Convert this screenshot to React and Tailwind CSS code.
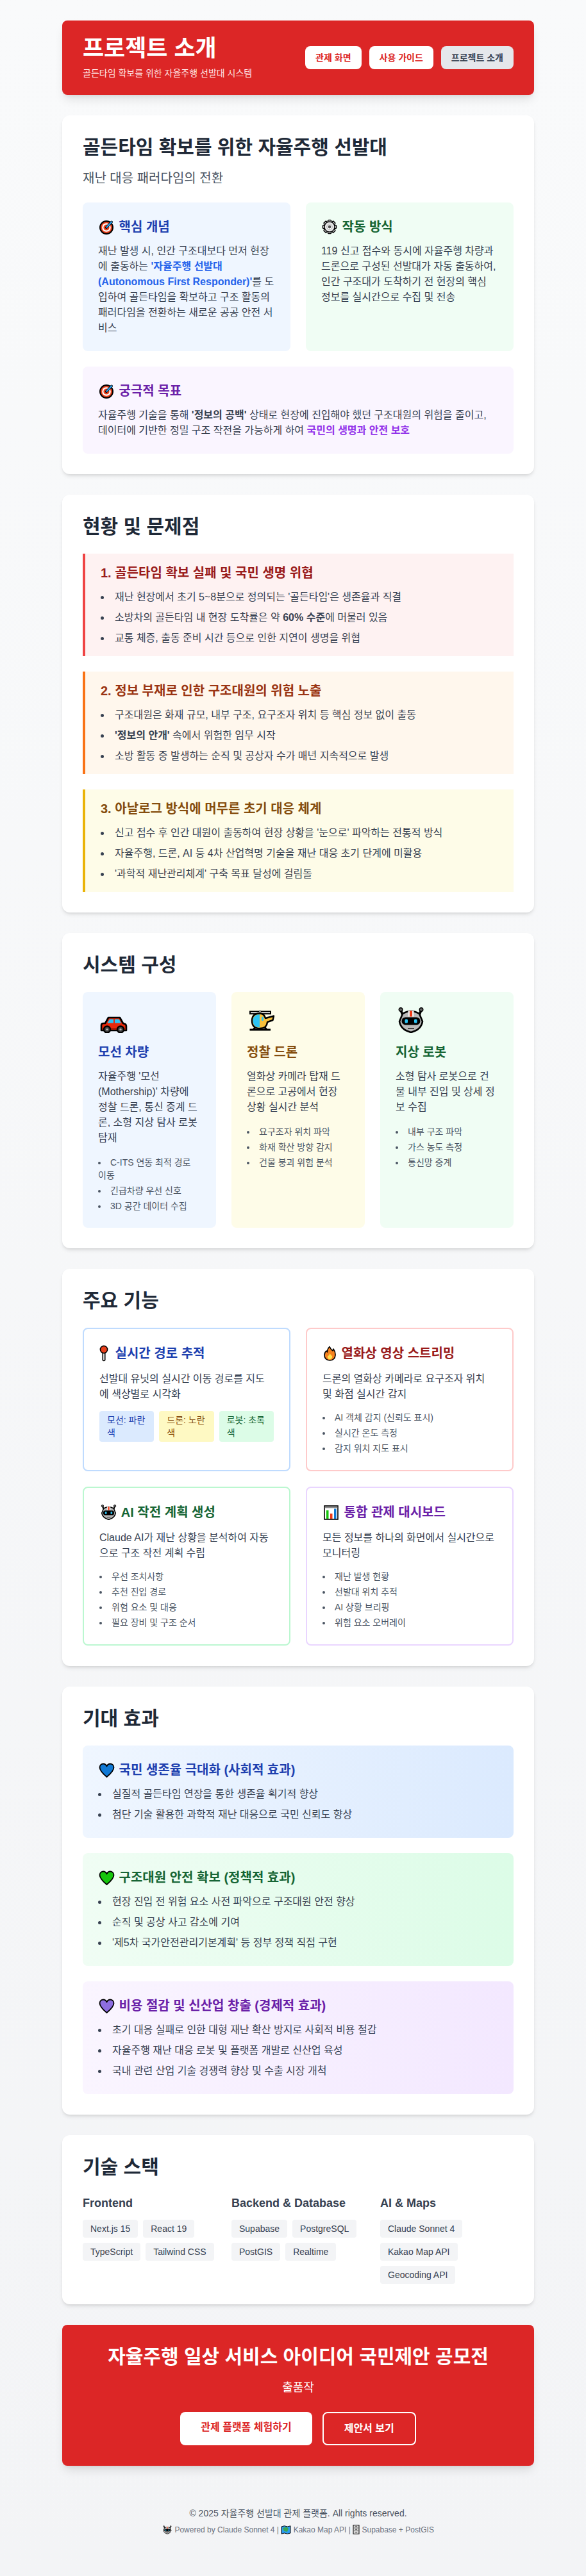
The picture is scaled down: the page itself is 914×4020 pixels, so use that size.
import React from 'react';

/* Emoji-style icons drawn by hand, black outline like the reference */
const TargetIcon = () => (
    <svg viewBox="0 0 27 24" className="inline-block w-[27px] h-6 align-[-5px]">
        <circle cx="13" cy="13" r="10" fill="#e8401c" stroke="#000" strokeWidth="2" />
        <circle cx="13" cy="13" r="6.8" fill="#fff" />
        <circle cx="13" cy="13" r="4.6" fill="#e8401c" />
        <path d="M13 13 L21 4.5" stroke="#000" strokeWidth="4" strokeLinecap="round" />
        <path d="M13.5 12.5 L21 4.5" stroke="#2aa3f0" strokeWidth="2.4" strokeLinecap="round" />
    </svg>
);

const GearIcon = () => (
    <svg viewBox="0 0 27 24" className="inline-block w-[27px] h-6 align-[-5px]">
        {[0, 45, 90, 135, 180, 225, 270, 315].map((a) => (
            <rect key={a} x="10.5" y="1.5" width="5" height="6" rx="1" fill="#fff" stroke="#000" strokeWidth="1.5" transform={`rotate(${a} 13 12)`} />
        ))}
        <circle cx="13" cy="12" r="8" fill="#e8e8e8" stroke="#000" strokeWidth="1.5" />
        <circle cx="13" cy="12" r="4.2" fill="#fff" stroke="#aaa" strokeWidth="1" />
        <circle cx="13" cy="12" r="2.4" fill="#555" />
    </svg>
);

const CarIcon = () => (
    <svg viewBox="0 0 48 40" className="block w-12 h-10">
        <path d="M5 28 Q5 25 8 25 L11 25 L16 16 H34 L39 25 L42 26 Q44 27 44 30 V36 H5 Z" fill="#e8290b" stroke="#000" strokeWidth="2.6" strokeLinejoin="round" />
        <path d="M14.5 24.5 L18 18.5 H24 V24.5 Z M26 18.5 H32.5 L36 24.5 H26 Z" fill="#2cc4f5" />
        <rect x="6.5" y="32" width="36" height="3" fill="#a81c06" />
        <circle cx="14" cy="34.5" r="5" fill="#444" stroke="#000" strokeWidth="2.4" />
        <circle cx="35" cy="34.5" r="5" fill="#444" stroke="#000" strokeWidth="2.4" />
        <circle cx="14" cy="34.5" r="1.6" fill="#bbb" />
        <circle cx="35" cy="34.5" r="1.6" fill="#bbb" />
    </svg>
);

const HeliIcon = () => (
    <svg viewBox="0 0 48 40" className="block w-12 h-10">
        <rect x="5" y="6.5" width="32" height="3.6" fill="#fff" stroke="#000" strokeWidth="2" />
        <rect x="19" y="4.5" width="3" height="6" fill="#888" />
        <path d="M4.5 35 H37 M10 35 L14 30 M31 35 L27 30" stroke="#000" strokeWidth="3" />
        <path d="M29 17 L42 13.5 L40.5 20 L32 23 Q31 33 20 33 Q8 33 8 21 Q8 9.5 20 9.5 Q27 9.5 29 17 Z" fill="#f9c13c" stroke="#000" strokeWidth="2.4" strokeLinejoin="round" />
        <path d="M20 11 V31.5 Q9.5 31 9.5 21 Q9.5 11.5 20 11 Z" fill="#2cc4f5" />
        <rect x="23" y="14.5" width="3" height="6.5" rx="1.5" fill="#2cc4f5" />
    </svg>
);

const RobotShape = () => (
    <>
        <path d="M8 4 L11 12 M40 4 L37 12" stroke="#000" strokeWidth="3.6" />
        <circle cx="8" cy="3.5" r="2.8" fill="#666" stroke="#000" strokeWidth="1.4" />
        <circle cx="40" cy="3.5" r="2.8" fill="#666" stroke="#000" strokeWidth="1.4" />
        <path d="M11 10 Q24 2 37 10 L42 22 Q40 35 24 39 Q8 35 6 22 Z" fill="#b9b9b9" stroke="#000" strokeWidth="2.6" strokeLinejoin="round" />
        <rect x="19.5" y="5.5" width="9" height="9" fill="#eee" />
        <rect x="22" y="5.5" width="4" height="9" fill="#f03a17" />
        <rect x="9.5" y="15.5" width="29" height="12" rx="6" fill="#000" />
        <rect x="14.5" y="18.5" width="4.5" height="6" rx="1.5" fill="#2cc4f5" />
        <rect x="29" y="18.5" width="4.5" height="6" rx="1.5" fill="#2cc4f5" />
        <rect x="19" y="32" width="10" height="1.8" fill="#333" />
    </>
);

const RobotBig = () => (
    <svg viewBox="0 0 48 40" className="block w-12 h-10"><RobotShape /></svg>
);

const RobotIcon = () => (
    <svg viewBox="0 0 48 40" className="inline-block w-[29px] h-6 align-[-5px]"><RobotShape /></svg>
);

const RobotTiny = () => (
    <svg viewBox="0 0 48 40" className="inline-block w-4 h-[14px] align-[-3px]"><RobotShape /></svg>
);

const PinIcon = () => (
    <svg viewBox="0 0 19 26" className="inline-block w-[19px] h-[26px] align-[-6px]">
        <path d="M5.2 12 V23.5 Q7 25.5 8.8 23.5 V12 Z" fill="#ddd" stroke="#000" strokeWidth="1.5" />
        <circle cx="7" cy="7" r="5.6" fill="#e8401c" stroke="#000" strokeWidth="1.6" />
    </svg>
);

const FireIcon = () => (
    <svg viewBox="0 0 24 24" className="inline-block w-6 h-6 align-[-5px]">
        <path d="M11 1.5 Q13 6 16 8 Q17 6 17 5 Q20.5 10 20 15 Q19.5 22.5 11.5 23 Q3.5 22.5 3 15 Q3 10.5 6 8 Q7 9.5 7.5 10 Q7.5 5 11 1.5 Z" fill="#f5821f" stroke="#000" strokeWidth="1.6" strokeLinejoin="round" />
        <path d="M11.5 12 Q13 15 15 16 Q16 20 11.5 21.5 Q7 20.5 8 16.5 Q10.5 15.5 11.5 12 Z" fill="#ffe14d" />
    </svg>
);

const ChartIcon = () => (
    <svg viewBox="0 0 28 24" className="inline-block w-7 h-6 align-[-5px]">
        <rect x="3" y="2" width="21" height="21" fill="#fff" stroke="#000" strokeWidth="1.6" />
        <rect x="3.8" y="2.8" width="19.4" height="2.6" fill="#888" />
        <rect x="6" y="9" width="3.5" height="13" fill="#16c60c" />
        <rect x="12" y="14" width="3.5" height="8" fill="#f03a17" />
        <rect x="18" y="6.5" width="3.5" height="15.5" fill="#0f78d4" />
    </svg>
);

const HeartIcon = ({ color }) => (
    <svg viewBox="0 0 27 24" className="inline-block w-[27px] h-6 align-[-5px]">
        <path d="M13.5 23 C5 16 2.5 12 2.5 8 C2.5 4.5 5.5 2.5 8 2.5 C10.5 2.5 12.5 4 13.5 6.5 C14.5 4 16.5 2.5 19 2.5 C21.5 2.5 24.5 4.5 24.5 8 C24.5 12 22 16 13.5 23 Z" fill={color} stroke="#000" strokeWidth="1.8" strokeLinejoin="round" />
    </svg>
);

const MapIcon = () => (
    <svg viewBox="0 0 16 14" className="inline-block w-4 h-[14px] align-[-3px]">
        <path d="M1 2 L5.5 0.8 L10.5 2 L15 0.8 V12 L10.5 13.2 L5.5 12 L1 13.2 Z" fill="#2a9df4" stroke="#000" strokeWidth="1" />
        <path d="M3 4 L9 2.5 L12 5 L10 10 L5 9 Z" fill="#3aa655" />
    </svg>
);

const CabinetIcon = () => (
    <svg viewBox="0 0 11 15" className="inline-block w-[11px] h-[15px] align-[-3px]">
        <rect x="1" y="0.6" width="9" height="13.8" fill="#d5d5d5" stroke="#000" strokeWidth="1" />
        <path d="M1 5 H10 M1 9.5 H10" stroke="#666" strokeWidth="0.8" />
        <rect x="4.2" y="2.2" width="2.6" height="1.2" fill="#444" />
        <rect x="4.2" y="6.6" width="2.6" height="1.2" fill="#444" />
        <rect x="4.2" y="11" width="2.6" height="1.2" fill="#444" />
    </svg>
);

const problems = [
    {
        title: '1. 골든타임 확보 실패 및 국민 생명 위협',
        box: 'border-[#ef4444] bg-[#fef2f2]',
        head: 'text-[#991b1b]',
        items: [
            "재난 현장에서 초기 5~8분으로 정의되는 '골든타임'은 생존율과 직결",
            <>소방차의 골든타임 내 현장 도착률은 약 <strong>60% 수준</strong>에 머물러 있음</>,
            '교통 체증, 출동 준비 시간 등으로 인한 지연이 생명을 위협',
        ],
    },
    {
        title: '2. 정보 부재로 인한 구조대원의 위험 노출',
        box: 'border-[#f97316] bg-[#fff7ed]',
        head: 'text-[#9a3412]',
        items: [
            '구조대원은 화재 규모, 내부 구조, 요구조자 위치 등 핵심 정보 없이 출동',
            <><strong>'정보의 안개'</strong> 속에서 위험한 임무 시작</>,
            '소방 활동 중 발생하는 순직 및 공상자 수가 매년 지속적으로 발생',
        ],
    },
    {
        title: '3. 아날로그 방식에 머무른 초기 대응 체계',
        box: 'border-[#eab308] bg-[#fefce8]',
        head: 'text-[#854d0e]',
        items: [
            "신고 접수 후 인간 대원이 출동하여 현장 상황을 '눈으로' 파악하는 전통적 방식",
            '자율주행, 드론, AI 등 4차 산업혁명 기술을 재난 대응 초기 단계에 미활용',
            "'과학적 재난관리체계' 구축 목표 달성에 걸림돌",
        ],
    },
];

const units = [
    {
        icon: <CarIcon />,
        title: '모선 차량',
        box: 'bg-[#eff6ff]',
        head: 'text-[#1e40af]',
        text: "자율주행 '모선 (Mothership)' 차량에 정찰 드론, 통신 중계 드론, 소형 지상 탐사 로봇 탑재",
        items: ['C-ITS 연동 최적 경로 이동', '긴급차량 우선 신호', '3D 공간 데이터 수집'],
    },
    {
        icon: <HeliIcon />,
        title: '정찰 드론',
        box: 'bg-[#fefce8]',
        head: 'text-[#854d0e]',
        text: '열화상 카메라 탑재 드론으로 고공에서 현장 상황 실시간 분석',
        items: ['요구조자 위치 파악', '화재 확산 방향 감지', '건물 붕괴 위험 분석'],
    },
    {
        icon: <RobotBig />,
        title: '지상 로봇',
        box: 'bg-[#f0fdf4]',
        head: 'text-[#166534]',
        text: '소형 탐사 로봇으로 건물 내부 진입 및 상세 정보 수집',
        items: ['내부 구조 파악', '가스 농도 측정', '통신망 중계'],
    },
];

const effects = [
    {
        color: '#0f78d4',
        title: '국민 생존율 극대화 (사회적 효과)',
        box: 'from-[#eff6ff] to-[#dbeafe]',
        head: 'text-[#1e40af]',
        items: ['실질적 골든타임 연장을 통한 생존율 획기적 향상', '첨단 기술 활용한 과학적 재난 대응으로 국민 신뢰도 향상'],
    },
    {
        color: '#16c60c',
        title: '구조대원 안전 확보 (정책적 효과)',
        box: 'from-[#f0fdf4] to-[#dcfce7]',
        head: 'text-[#166534]',
        items: ['현장 진입 전 위험 요소 사전 파악으로 구조대원 안전 향상', '순직 및 공상 사고 감소에 기여', "'제5차 국가안전관리기본계획' 등 정부 정책 직접 구현"],
    },
    {
        color: '#8e6ee0',
        title: '비용 절감 및 신산업 창출 (경제적 효과)',
        box: 'from-[#faf5ff] to-[#f3e8ff]',
        head: 'text-[#6b21a8]',
        items: ['초기 대응 실패로 인한 대형 재난 확산 방지로 사회적 비용 절감', '자율주행 재난 대응 로봇 및 플랫폼 개발로 신산업 육성', '국내 관련 산업 기술 경쟁력 향상 및 수출 시장 개척'],
    },
];

const stack = [
    { title: 'Frontend', tags: ['Next.js 15', 'React 19', 'TypeScript', 'Tailwind CSS'] },
    { title: 'Backend & Database', tags: ['Supabase', 'PostgreSQL', 'PostGIS', 'Realtime'] },
    { title: 'AI & Maps', tags: ['Claude Sonnet 4', 'Kakao Map API', 'Geocoding API'] },
];

const Section = ({ title, children }) => (
    <section className="bg-white rounded-xl shadow-md p-8 mb-8">
        <h2 className="text-3xl font-bold text-[#1f2937] mb-6">{title}</h2>
        {children}
    </section>
);

const SmallList = ({ items }) => (
    <ul className="list-disc list-inside text-sm text-[#4b5563] space-y-1">
        {items.map((item) => <li key={item}>{item}</li>)}
    </ul>
);

const FeatureCard = ({ border, head, title, text, children }) => (
    <div className={`border-2 rounded-lg p-6 ${border}`}>
        <h3 className={`text-xl leading-7 h-7 font-bold mb-[14px] ${head}`}>{title}</h3>
        <p className="text-[#374151] mb-[14px]">{text}</p>
        {children}
    </div>
);

export default function App() {
    return (
        <div className="min-h-screen bg-linear-to-b from-[#f9fafb] to-[#f3f4f6] font-['Liberation_Sans','Noto_Sans_CJK_KR',sans-serif] pl-[97px] pt-8">
            <div className="w-[736px]">
                {/* Header */}
                <header className="bg-[#dc2626] text-white rounded-lg shadow-lg px-8 py-6 mb-8 flex items-center justify-between">
                    <div>
                        <h1 className="text-4xl font-bold mb-2">프로젝트 소개</h1>
                        <p className="text-sm text-[#fee2e2]">골든타임 확보를 위한 자율주행 선발대 시스템</p>
                    </div>
                    <div className="flex gap-3">
                        <button className="px-4 py-2 bg-white text-[#dc2626] rounded-lg text-sm font-semibold">관제 화면</button>
                        <button className="px-4 py-2 bg-white text-[#dc2626] rounded-lg text-sm font-semibold">사용 가이드</button>
                        <button className="px-4 py-2 bg-[#e5e7eb] text-[#374151] rounded-lg text-sm font-semibold">프로젝트 소개</button>
                    </div>
                </header>

                {/* Vision */}
                <section className="bg-white rounded-xl shadow-md p-8 mb-8">
                    <h2 className="text-3xl font-bold text-[#1f2937] mb-4">골든타임 확보를 위한 자율주행 선발대</h2>
                    <p className="text-xl text-[#4b5563] mb-6">재난 대응 패러다임의 전환</p>
                    <div className="grid grid-cols-2 gap-6 mb-6">
                        <div className="bg-[#eff6ff] rounded-lg p-6">
                            <h3 className="text-xl h-7 font-bold text-[#1e40af] mb-3"><TargetIcon /> 핵심 개념</h3>
                            <p className="text-[#374151]">
                                재난 발생 시, 인간 구조대보다 먼저 현장에 출동하는 <strong className="text-[#2563eb]">'자율주행 선발대 (Autonomous First Responder)'</strong>를 도입하여 골든타임을 확보하고 구조 활동의 패러다임을 전환하는 새로운 공공 안전 서비스
                            </p>
                        </div>
                        <div className="bg-[#f0fdf4] rounded-lg p-6">
                            <h3 className="text-xl h-7 font-bold text-[#166534] mb-3"><GearIcon /> 작동 방식</h3>
                            <p className="text-[#374151]">
                                119 신고 접수와 동시에 자율주행 차량과 드론으로 구성된 선발대가 자동 출동하여, 인간 구조대가 도착하기 전 현장의 핵심 정보를 실시간으로 수집 및 전송
                            </p>
                        </div>
                    </div>
                    <div className="bg-[#faf5ff] rounded-lg p-6">
                        <h3 className="text-xl h-7 font-bold text-[#6b21a8] mb-3"><TargetIcon /> 궁극적 목표</h3>
                        <p className="text-[#374151]">
                            자율주행 기술을 통해 <strong>'정보의 공백'</strong> 상태로 현장에 진입해야 했던 구조대원의 위험을 줄이고, 데이터에 기반한 정밀 구조 작전을 가능하게 하여 <strong className="text-[#9333ea]">국민의 생명과 안전 보호</strong>
                        </p>
                    </div>
                </section>

                {/* Problems */}
                <Section title="현황 및 문제점">
                    <div className="space-y-6">
                        {problems.map((p) => (
                            <div key={p.title} className={`border-l-4 pl-6 py-4 ${p.box}`}>
                                <h3 className={`text-xl font-bold mb-3 ${p.head}`}>{p.title}</h3>
                                <ul className="list-disc list-inside text-[#374151] space-y-2">
                                    {p.items.map((item, i) => <li key={i}>{item}</li>)}
                                </ul>
                            </div>
                        ))}
                    </div>
                </Section>

                {/* Units */}
                <Section title="시스템 구성">
                    <div className="grid grid-cols-3 gap-6">
                        {units.map((u) => (
                            <div key={u.title} className={`rounded-lg p-6 ${u.box}`}>
                                <div className="mb-4">{u.icon}</div>
                                <h3 className={`text-xl font-bold mb-3 ${u.head}`}>{u.title}</h3>
                                <p className="text-[#374151] mb-4">{u.text}</p>
                                <SmallList items={u.items} />
                            </div>
                        ))}
                    </div>
                </Section>

                {/* Features */}
                <Section title="주요 기능">
                    <div className="grid grid-cols-2 gap-6">
                        <FeatureCard border="border-[#bfdbfe]" head="text-[#1e40af]" title={<><PinIcon /> 실시간 경로 추적</>} text="선발대 유닛의 실시간 이동 경로를 지도에 색상별로 시각화">
                            <div className="grid grid-cols-3 gap-2 text-sm">
                                <div className="bg-[#dbeafe] text-[#1e40af] rounded px-3 py-1">모선: 파란색</div>
                                <div className="bg-[#fef9c3] text-[#854d0e] rounded px-3 py-1">드론: 노란색</div>
                                <div className="bg-[#dcfce7] text-[#166534] rounded px-3 py-1">로봇: 초록색</div>
                            </div>
                        </FeatureCard>
                        <FeatureCard border="border-[#fecaca]" head="text-[#991b1b]" title={<><FireIcon /> 열화상 영상 스트리밍</>} text="드론의 열화상 카메라로 요구조자 위치 및 화점 실시간 감지">
                            <SmallList items={['AI 객체 감지 (신뢰도 표시)', '실시간 온도 측정', '감지 위치 지도 표시']} />
                        </FeatureCard>
                        <FeatureCard border="border-[#bbf7d0]" head="text-[#166534]" title={<><RobotIcon /> AI 작전 계획 생성</>} text="Claude AI가 재난 상황을 분석하여 자동으로 구조 작전 계획 수립">
                            <SmallList items={['우선 조치사항', '추천 진입 경로', '위험 요소 및 대응', '필요 장비 및 구조 순서']} />
                        </FeatureCard>
                        <FeatureCard border="border-[#e9d5ff]" head="text-[#6b21a8]" title={<><ChartIcon /> 통합 관제 대시보드</>} text="모든 정보를 하나의 화면에서 실시간으로 모니터링">
                            <SmallList items={['재난 발생 현황', '선발대 위치 추적', 'AI 상황 브리핑', '위험 요소 오버레이']} />
                        </FeatureCard>
                    </div>
                </Section>

                {/* Effects */}
                <Section title="기대 효과">
                    <div className="space-y-6">
                        {effects.map((e) => (
                            <div key={e.title} className={`bg-linear-to-r rounded-lg p-6 ${e.box}`}>
                                <h3 className={`text-xl h-7 font-bold mb-3 ${e.head}`}><HeartIcon color={e.color} /> {e.title}</h3>
                                <ul className="list-disc list-inside text-[#374151] space-y-2">
                                    {e.items.map((item) => <li key={item}>{item}</li>)}
                                </ul>
                            </div>
                        ))}
                    </div>
                </Section>

                {/* Stack */}
                <Section title="기술 스택">
                    <div className="grid grid-cols-3 gap-6">
                        {stack.map((s) => (
                            <div key={s.title}>
                                <h3 className="text-lg font-semibold text-[#374151] mb-3">{s.title}</h3>
                                <div className="flex flex-wrap gap-2">
                                    {s.tags.map((t) => (
                                        <span key={t} className="px-3 py-1 bg-[#f3f4f6] text-[#374151] rounded text-sm">{t}</span>
                                    ))}
                                </div>
                            </div>
                        ))}
                    </div>
                </Section>

                {/* CTA */}
                <section className="bg-[#dc2626] text-white rounded-lg shadow-lg p-8 text-center">
                    <h2 className="text-3xl font-bold mb-4">자율주행 일상 서비스 아이디어 국민제안 공모전</h2>
                    <p className="text-lg mb-6">출품작</p>
                    <div className="flex justify-center gap-4">
                        <a className="px-8 py-3 bg-white text-[#dc2626] rounded-lg font-bold">관제 플랫폼 체험하기</a>
                        <a className="px-8 py-3 border-2 border-white text-white rounded-lg font-bold">제안서 보기</a>
                    </div>
                </section>

                {/* Footer */}
                <footer className="text-center pt-16 pb-16">
                    <p className="text-sm text-[#4b5563]">© 2025 자율주행 선발대 관제 플랫폼. All rights reserved.</p>
                    <p className="text-xs h-4 text-[#6b7280] mt-2"><RobotTiny /> Powered by Claude Sonnet 4 | <MapIcon /> Kakao Map API | <CabinetIcon /> Supabase + PostGIS</p>
                </footer>
            </div>
        </div>
    );
}
